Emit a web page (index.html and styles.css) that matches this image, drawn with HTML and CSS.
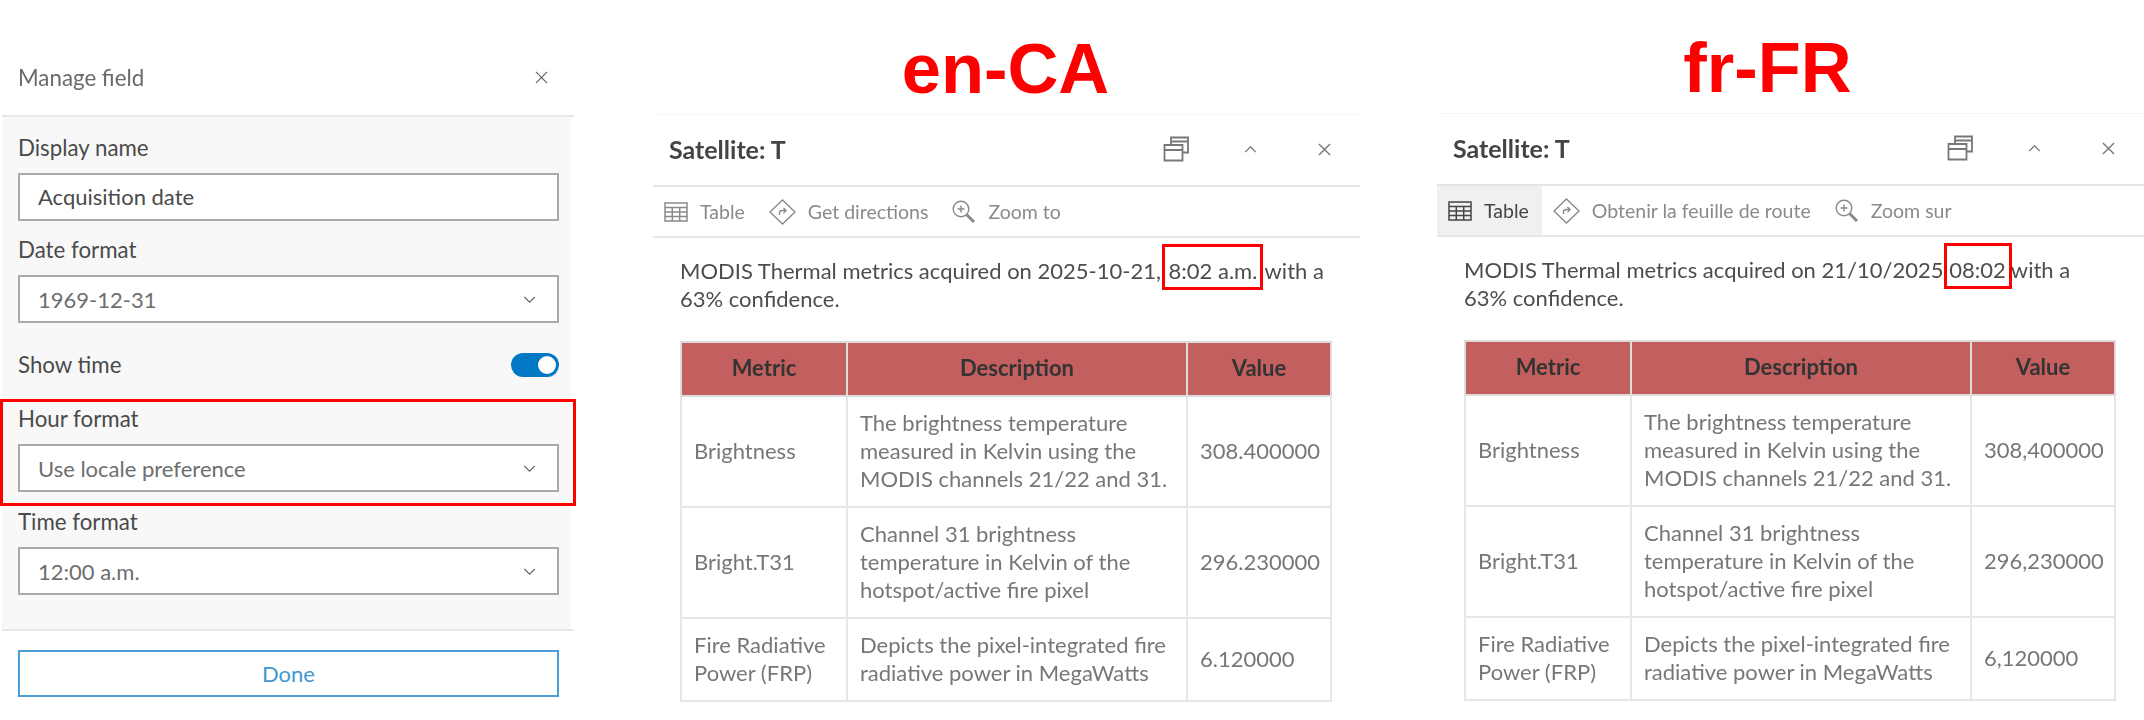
FILE: index.html
```html
<!DOCTYPE html>
<html lang="en">
<head>
<meta charset="utf-8">
<title>Manage field and locale comparison</title>
<link rel="stylesheet" href="styles.css">
</head>
<body>
<main class="page">
  <section class="manage">
    <header class="manage-head">
      <span class="manage-title">Manage field</span>
      <svg class="manage-close" viewBox="0 0 14 14"><path d="M1 1l12 12M13 1L1 13"/></svg>
    </header>
    <div class="manage-body">
      <div class="field">
        <label class="label">Display name</label>
        <div class="control control-input">Acquisition date</div>
      </div>
      <div class="field">
        <label class="label">Date format</label>
        <div class="control">1969-12-31<svg class="chev" viewBox="0 0 14 8"><path d="M1 1l6 6 6-6"/></svg></div>
      </div>
      <div class="toggle-row">
        <span class="label">Show time</span>
        <span class="toggle"><span class="knob"></span></span>
      </div>
      <div class="field field-hour">
        <label class="label">Hour format</label>
        <div class="control">Use locale preference<svg class="chev" viewBox="0 0 14 8"><path d="M1 1l6 6 6-6"/></svg></div>
      </div>
      <div class="field field-time">
        <label class="label">Time format</label>
        <div class="control">12:00 a.m.<svg class="chev" viewBox="0 0 14 8"><path d="M1 1l6 6 6-6"/></svg></div>
      </div>
    </div>
    <footer class="manage-foot"><button class="done">Done</button></footer>
  </section>

  <section class="locale locale-ca">
    <h1 class="locale-name">en-CA</h1>
    <article class="popup">
      <header class="popup-head">
        <h2 class="popup-title">Satellite: T</h2>
        <div class="popup-actions">
          <svg class="act-stack" viewBox="0 0 26 26"><path d="M8 8V1.500h17v15h-5M8 5.500h17"/><path d="M1.500 9h18v15.500h-18zM1.500 14h18"/></svg>
          <svg class="act-chev" viewBox="0 0 14 8"><path d="M1 7l6-6 6 6"/></svg>
          <svg class="act-close" viewBox="0 0 14 14"><path d="M1 1l12 12M13 1L1 13"/></svg>
        </div>
      </header>
      <nav class="tools">
        <span class="tool"><svg class="ic-table" viewBox="0 0 24 20"><path d="M1 1h22v18H1zM1 5.500h22M1 10h22M1 14.500h22M8.300 5.500V19M15.700 5.500V19"/></svg>Table</span>
        <span class="tool"><svg class="ic-dir" viewBox="0 0 27 26"><path d="M13.500 1L26 13 13.500 25 1 13z"/><path d="M10.500 16v-2q0-2.500 2.500-2.500h3.500M14.500 9l2.500 2.500-2.500 2.500"/></svg>Get directions</span>
        <span class="tool"><svg class="ic-zoom" viewBox="0 0 24 23"><circle cx="9" cy="9" r="7.800"/><path d="M9 5.500v7M5.500 9h7"/><path class="thick" d="M14.500 14.500L22 22"/></svg>Zoom to</span>
      </nav>
      <p class="summary">MODIS Thermal metrics acquired on 2025-10-21, <span class="mark">8:02 a.m.</span> with a 63% confidence.</p>
      <table class="metrics">
        <thead><tr><th>Metric</th><th>Description</th><th>Value</th></tr></thead>
        <tbody>
          <tr class="row-a"><td>Brightness</td><td>The brightness temperature measured in Kelvin using the MODIS channels 21/22 and 31.</td><td>308.400000</td></tr>
          <tr class="row-b"><td>Bright.T31</td><td>Channel 31 brightness temperature in Kelvin of the hotspot/active fire pixel</td><td>296.230000</td></tr>
          <tr class="row-c"><td>Fire Radiative Power (FRP)</td><td>Depicts the pixel-integrated fire radiative power in MegaWatts</td><td>6.120000</td></tr>
        </tbody>
      </table>
    </article>
  </section>

  <section class="locale locale-fr">
    <h1 class="locale-name">fr-FR</h1>
    <article class="popup">
      <header class="popup-head">
        <h2 class="popup-title">Satellite: T</h2>
        <div class="popup-actions">
          <svg class="act-stack" viewBox="0 0 26 26"><path d="M8 8V1.500h17v15h-5M8 5.500h17"/><path d="M1.500 9h18v15.500h-18zM1.500 14h18"/></svg>
          <svg class="act-chev" viewBox="0 0 14 8"><path d="M1 7l6-6 6 6"/></svg>
          <svg class="act-close" viewBox="0 0 14 14"><path d="M1 1l12 12M13 1L1 13"/></svg>
        </div>
      </header>
      <nav class="tools">
        <span class="tool tool-active"><svg class="ic-table" viewBox="0 0 24 20"><path d="M1 1h22v18H1zM1 5.500h22M1 10h22M1 14.500h22M8.300 5.500V19M15.700 5.500V19"/></svg>Table</span>
        <span class="tool"><svg class="ic-dir" viewBox="0 0 27 26"><path d="M13.500 1L26 13 13.500 25 1 13z"/><path d="M10.500 16v-2q0-2.500 2.500-2.500h3.500M14.500 9l2.500 2.500-2.500 2.500"/></svg>Obtenir la feuille de route</span>
        <span class="tool"><svg class="ic-zoom" viewBox="0 0 24 23"><circle cx="9" cy="9" r="7.800"/><path d="M9 5.500v7M5.500 9h7"/><path class="thick" d="M14.500 14.500L22 22"/></svg>Zoom sur</span>
      </nav>
      <p class="summary">MODIS Thermal metrics acquired on 21/10/2025 <span class="mark">08:02</span> with a 63% confidence.</p>
      <table class="metrics">
        <thead><tr><th>Metric</th><th>Description</th><th>Value</th></tr></thead>
        <tbody>
          <tr class="row-a"><td>Brightness</td><td>The brightness temperature measured in Kelvin using the MODIS channels 21/22 and 31.</td><td>308,400000</td></tr>
          <tr class="row-b"><td>Bright.T31</td><td>Channel 31 brightness temperature in Kelvin of the hotspot/active fire pixel</td><td>296,230000</td></tr>
          <tr class="row-c"><td>Fire Radiative Power (FRP)</td><td>Depicts the pixel-integrated fire radiative power in MegaWatts</td><td>6,120000</td></tr>
        </tbody>
      </table>
    </article>
  </section>
</main>
</body>
</html>
```

FILE: styles.css
```css
* { box-sizing: border-box; }
html, body { margin: 0; padding: 0; background: #fff; }
body { font-family: Lato, "Noto Sans", sans-serif; font-size: 22px; color: #555; overflow: hidden; }
svg { fill: none; stroke: currentColor; flex: none; display: block; }

.page { display: flex; align-items: flex-start; width: 2144px; height: 720px; }

/* Left: manage field */
.manage { width: 572px; margin: 48px 0 0 2px; display: flex; flex-direction: column; filter: blur(.6px); }
.manage-head { height: 69px; display: flex; align-items: center; justify-content: space-between; padding: 0 26px 8px 16px; border-bottom: 2px solid #e8e8e8; }
.manage-title { color: #6a6a6a; font-size: 22.300px; }
.manage-close { width: 13px; height: 13px; color: #666; stroke-width: 1.300; }
.manage-body { height: 513px; width: 569px; background: #f8f8f8; padding: 18px 12px 0 16px; }
.label { display: block; color: #4a4a4a; line-height: 26px; font-size: 22.300px; }
.field { display: flex; flex-direction: column; gap: 12px; margin-bottom: 16px; }
.control { height: 48px; background: #fff; border: 2px solid #a9a9a9; display: flex; align-items: center; justify-content: space-between; padding: 0 21px 0 18px; color: #6e6e6e; }
.control-input { color: #4a4a4a; padding-bottom: 2px; }
.chev { width: 13px; height: 7px; color: #666; stroke-width: 1.500; }
.toggle-row { display: flex; align-items: center; justify-content: space-between; height: 24px; margin: 30px 0 29px; }
.toggle { width: 48px; height: 24px; border-radius: 12px; background: #0078c4; display: flex; align-items: center; justify-content: flex-end; padding-right: 3px; }
.knob { width: 18px; height: 18px; border-radius: 50%; background: #fff; }
.field-hour { position: relative; margin-bottom: 17px; }
.field-hour::after { content: ""; position: absolute; inset: -7px -17px -14px -18px; border: 3px solid #f00; }
.manage-foot { padding: 19px 15px 0 16px; border-top: 2px solid #e8e8e8; width: 572px; margin-top: -1px; }
.done { display: block; width: 100%; height: 47px; background: #fff; border: 2px solid #4a9fd6; font: inherit; color: #3f97cf; }

/* Locale columns */
.locale { display: flex; flex-direction: column; }
.locale-ca { width: 707px; margin-left: 79px; }
.locale-fr { width: 707px; margin-left: 77px; margin-top: -1px; }
.locale-name { margin: 31px 0 0; height: 83px; font: 700 70.500px/76px "Liberation Sans", Arial, sans-serif; color: #f00; text-align: center; filter: blur(.4px); }
.locale-ca .locale-name { padding-right: 2px; }
.locale-fr .locale-name { padding-right: 46px; }
.popup { border-top: 1px solid #f6f6f6; filter: blur(.6px); }
.popup-head { height: 72px; display: flex; align-items: center; justify-content: space-between; padding: 0 29px 2px 16px; border-bottom: 2px solid #e4e4e4; }
.popup-title { margin: 0; font-size: 25px; font-weight: 700; color: #444; }
.popup-actions { display: flex; align-items: center; }
.act-stack { width: 26px; height: 26px; color: #777; stroke-width: 1.800; margin-right: 55px; }
.act-chev { width: 13px; height: 7px; color: #777; stroke-width: 1.600; margin-right: 61px; }
.act-close { width: 13px; height: 13px; color: #777; stroke-width: 1.500; }
.tools { height: 51px; display: flex; align-items: stretch; border-bottom: 2px solid #e6e6e6; color: #8a8a8a; font-size: 19.500px; }
.tool { display: flex; align-items: center; gap: 12px; padding: 0 13px 0 11px; }
.tool-active { background: #f0f0f0; color: #444; }
.ic-table { width: 24px; height: 20px; stroke-width: 1.500; }
.ic-dir { width: 27px; height: 26px; stroke-width: 1.400; }
.ic-zoom { width: 24px; height: 23px; stroke-width: 1.400; }
.ic-zoom .thick { stroke-width: 3; }
.summary { margin: 19px 0 0; padding: 0 8px 0 27px; line-height: 28px; color: #4d4d4d; width: 680px; }
.mark { position: relative; }
.locale-ca .mark { margin: 0 2px; }
.mark::after { content: ""; position: absolute; inset: -13px -6px -6px -5px; border: 3px solid #f00; }
.locale-ca .mark::after { left: -7px; }
.metrics { margin: 28px 0 0 27px; width: 652px; border-collapse: collapse; table-layout: fixed; }
.metrics th, .metrics td { border: 2px solid #e6e6e6; padding: 0 4px 2px 12px; line-height: 28px; font-weight: 400; color: #777; text-align: left; }
.metrics th { background: #c45f5f; height: 54px; color: #333; font-weight: 700; text-align: center; border-color: #dcdcdc; padding: 0 4px 2px; }
.metrics th:nth-child(1) { width: 166px; }
.metrics th:nth-child(2) { width: 340px; }
.row-a td { height: 111px; }
.row-b td { height: 111px; }
.row-c td { height: 83px; }
```
